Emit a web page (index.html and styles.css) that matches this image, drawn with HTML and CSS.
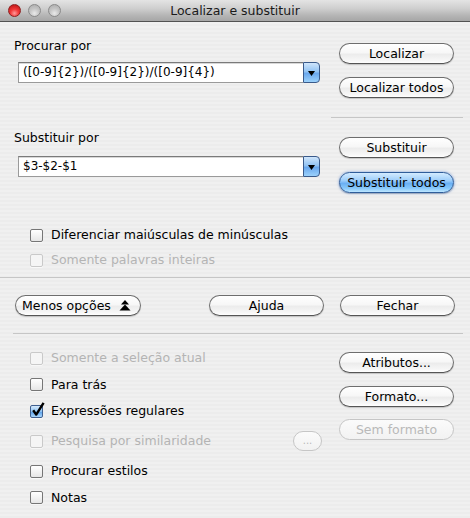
FILE: index.html
```html
<!DOCTYPE html>
<html lang="pt">
<head>
<meta charset="utf-8">
<title>Localizar e substituir</title>
<link rel="stylesheet" href="styles.css">
</head>
<body>
<div class="window">
  <div class="titlebar">
    <div class="lights">
      <span class="light red"></span>
      <span class="light"></span>
      <span class="light"></span>
    </div>
    <div class="title">Localizar e substituir</div>
    <div></div>
  </div>

  <div class="top">
    <div class="fields">
      <div class="label l1">Procurar por</div>
      <div class="combo c1">
        <div class="combo-text">([0-9]{2})/([0-9]{2})/([0-9]{4})</div>
        <div class="combo-btn"><svg width="7" height="5" viewBox="0 0 7 5"><path d="M0 0H7L3.5 5Z" fill="#000"/></svg></div>
      </div>
      <div class="label l2">Substituir por</div>
      <div class="combo c2">
        <div class="combo-text">$3-$2-$1</div>
        <div class="combo-btn"><svg width="7" height="5" viewBox="0 0 7 5"><path d="M0 0H7L3.5 5Z" fill="#000"/></svg></div>
      </div>
      <div class="checks top-checks">
        <div class="check"><span class="box"></span><span>Diferenciar maiúsculas de minúsculas</span></div>
        <div class="check disabled"><span class="box"></span><span>Somente palavras inteiras</span></div>
      </div>
    </div>
    <div class="actions">
      <div class="btn a1">Localizar</div>
      <div class="btn a2">Localizar todos</div>
      <div class="sep side"></div>
      <div class="btn a3">Substituir</div>
      <div class="btn default a4">Substituir todos</div>
    </div>
  </div>

  <div class="sep full"></div>

  <div class="midrow">
    <div class="btn more">Menos opções <svg class="dbl" width="12" height="11" viewBox="0 0 12 11"><path d="M6 0L10 4.5H2Z" fill="#000"/><path d="M6 4.5L11.5 10.5H0.5Z" fill="#000"/></svg></div>
    <div class="btn help">Ajuda</div>
    <div class="btn close">Fechar</div>
  </div>

  <div class="sep inset"></div>

  <div class="bottom">
    <div class="checks bottom-checks">
      <div class="check disabled"><span class="box"></span><span>Somente a seleção atual</span></div>
      <div class="check"><span class="box"></span><span>Para trás</span></div>
      <div class="check checked"><span class="box"><svg class="tick" width="14" height="15" viewBox="0 0 14 15"><path d="M2.2 8.2L5.2 12.6L12.6 0.8" fill="none" stroke="#000" stroke-width="2.4" stroke-linejoin="round"/></svg></span><span>Expressões regulares</span></div>
      <div class="check disabled tall"><span class="box"></span><span class="grow">Pesquisa por similaridade</span><div class="btn small disabled-btn">...</div></div>
      <div class="check"><span class="box"></span><span>Procurar estilos</span></div>
      <div class="check"><span class="box"></span><span>Notas</span></div>
    </div>
    <div class="actions bottom-actions">
      <div class="btn b1">Atributos...</div>
      <div class="btn b2">Formato...</div>
      <div class="btn disabled-btn b3">Sem formato</div>
    </div>
  </div>
</div>
</body>
</html>
```

FILE: styles.css
```css
* { box-sizing: border-box; }

html, body {
  margin: 0;
  padding: 0;
}

body {
  width: 470px;
  height: 518px;
  overflow: hidden;
  font-family: "DejaVu Sans", "Noto Sans", sans-serif;
  font-size: 12.5px;
  color: #000;
}

.window {
  width: 470px;
  height: 518px;
  background: repeating-linear-gradient(to bottom, #ececec 0, #ececec 2px, #f0f0f0 2px, #f0f0f0 4px);
}

/* Title bar */
.titlebar {
  height: 22px;
  display: grid;
  grid-template-columns: 1fr auto 1fr;
  align-items: center;
  background: linear-gradient(to bottom, #e4e4e4 0%, #cfcfcf 40%, #b4b4b4 75%, #a6a6a6 100%);
  border-bottom: 1px solid #515151;
}

.lights {
  display: flex;
  gap: 7px;
  padding-left: 8px;
  align-items: center;
}

.light {
  width: 13px;
  height: 13px;
  border-radius: 50%;
  border: 1px solid #8a8a8a;
  background: radial-gradient(circle at 50% 75%, #e9e9e9 0%, #c6c6c6 45%, #a9a9a9 100%);
}

.light.red {
  border-color: #8e1f1f;
  background: radial-gradient(circle at 50% 75%, #ff9a9a 0%, #f23a3a 40%, #b30f0f 100%);
}

.title {
  color: #1a1a1a;
  white-space: nowrap;
  line-height: 16px;
}

/* Top section */
.top {
  display: grid;
  grid-template-columns: 331px 132px;
}

.fields {
  display: flex;
  flex-direction: column;
}

.label {
  line-height: 16px;
  padding-left: 14px;
}

.l1 { margin-top: 16px; }
.l2 { margin-top: 47px; }

.combo {
  margin-left: 18px;
  width: 302px;
  height: 21px;
  display: flex;
}

.c1 { margin-top: 8px; }
.c2 { margin-top: 10px; }

.combo-text {
  flex: 1;
  background: #fff;
  border: 1px solid #9a9a9a;
  border-top-color: #7a7a7a;
  border-right: none;
  font-size: 12px;
  line-height: 19px;
  padding-left: 4px;
  white-space: nowrap;
  overflow: hidden;
  box-shadow: inset 0 1px 0 #d8d8d8;
}

.combo-btn {
  width: 17px;
  height: 21px;
  border: 1px solid #3a5a8a;
  border-radius: 0 4px 4px 0;
  background: linear-gradient(to bottom, #cfe5fb 0%, #92c3f3 45%, #6aa8ee 55%, #9bd1fb 100%);
  display: flex;
  align-items: center;
  justify-content: center;
  padding-top: 1px;
}

.checks {
  display: flex;
  flex-direction: column;
  padding-left: 30px;
}

.top-checks {
  margin-top: 50px;
  gap: 9px;
}

.check {
  display: flex;
  align-items: center;
  gap: 8px;
  line-height: 16px;
  height: 16px;
  white-space: nowrap;
}

.check .box {
  position: relative;
  width: 13px;
  height: 13px;
  border: 1px solid #767676;
  border-radius: 2px;
  background: linear-gradient(to bottom, #ffffff 0%, #f3f3f3 50%, #e6e6e6 100%);
  box-shadow: 0 1px 0 rgba(255,255,255,0.6);
  flex: none;
}

.check.disabled {
  color: #b4b4b4;
}

.check.disabled .box {
  border-color: #c9c9c9;
  background: #f5f5f5;
}

.check.checked .box {
  border-color: #3f5f8f;
  background: linear-gradient(to bottom, #d6eafc 0%, #8fc3f3 50%, #5ea2ea 55%, #a9d7fc 100%);
}

.tick {
  position: absolute;
  left: 0;
  top: -4px;
}

.check.tall {
  height: 23px;
}

.grow {
  flex: 1;
}

/* Buttons */
.btn {
  height: 21px;
  border: 1px solid #6e6e6e;
  border-bottom-color: #555;
  border-radius: 11px;
  background: linear-gradient(to bottom, #ffffff 0%, #f7f7f7 45%, #ececec 55%, #f6f6f6 85%, #ffffff 100%);
  box-shadow: 0 1px 1px rgba(0,0,0,0.18);
  display: flex;
  align-items: center;
  justify-content: center;
  line-height: 16px;
  white-space: nowrap;
}

.btn.default {
  border-color: #2f5d9a;
  background: linear-gradient(to bottom, #d3ebff 0%, #9ccdfa 40%, #6bb0f3 55%, #86c8fb 80%, #bde6ff 100%);
  box-shadow: 0 0 3px rgba(40,100,200,0.6), 0 1px 1px rgba(0,0,0,0.2);
}

.btn.disabled-btn {
  color: #b9b9b9;
  border-color: #c6c6c6;
  box-shadow: none;
  background: linear-gradient(to bottom, #fbfbfb 0%, #f2f2f2 100%);
}

.actions {
  display: flex;
  flex-direction: column;
  padding-left: 8px;
}

.actions .btn {
  width: 115px;
}

.a1 { margin-top: 21px; }
.a2 { margin-top: 13px; }
.a3 { margin-top: 0; }
.a4 { margin-top: 14px; }

.sep {
  height: 1px;
  background: #c6c6c6;
}

.sep.side {
  margin: 19px 0 19px -8px;
  width: 132px;
}

.sep.full {
  margin-top: 9px;
  width: 470px;
}

.midrow {
  display: flex;
  margin-top: 17px;
  padding-left: 15px;
}

.more {
  width: 126px;
  gap: 8px;
  justify-content: flex-start;
  padding-left: 6px;
}

.dbl { flex: none; }

.help {
  width: 115px;
  margin-left: 68px;
}

.close {
  width: 115px;
  margin-left: 16px;
}

.sep.inset {
  margin-top: 17px;
  margin-left: 13px;
  width: 450px;
}

/* Bottom section */
.bottom {
  display: grid;
  grid-template-columns: 331px 132px;
}

.bottom-checks {
  margin-top: 16px;
  gap: 10.5px;
  padding-right: 9px;
}

.btn.small {
  width: 29px;
  height: 20px;
  font-size: 10px;
  line-height: 12px;
}

.bottom-actions .b1 { margin-top: 18px; }
.bottom-actions .b2 { margin-top: 13px; }
.bottom-actions .b3 { margin-top: 12px; }
```
